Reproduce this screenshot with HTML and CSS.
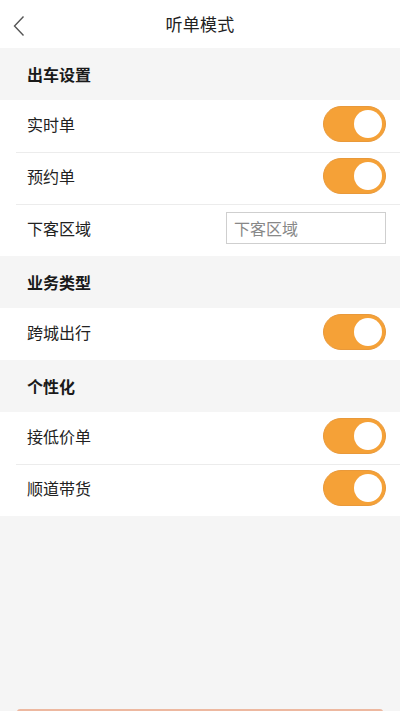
FILE: index.html
```html
<!DOCTYPE html>
<html lang="zh">
<head>
<meta charset="utf-8">
<title>听单模式</title>
<link rel="stylesheet" href="styles.css">
</head>
<body>
<div class="page">
  <header class="topbar">
    <span class="back">
      <svg width="12" height="22" viewBox="0 0 12 22"><path d="M10.5 1.5 L1.5 11 L10.5 20.5" fill="none" stroke="#555" stroke-width="1.4"/></svg>
    </span>
    <h1 class="title">听单模式</h1>
  </header>

  <div class="section-title">出车设置</div>
  <div class="group">
    <div class="row"><span class="label">实时单</span><span class="switch"><span class="knob"></span></span></div>
    <div class="row"><span class="label">预约单</span><span class="switch"><span class="knob"></span></span></div>
    <div class="row"><span class="label">下客区域</span><input class="field" type="text" placeholder="下客区域"></div>
  </div>

  <div class="section-title">业务类型</div>
  <div class="group">
    <div class="row"><span class="label">跨城出行</span><span class="switch"><span class="knob"></span></span></div>
  </div>

  <div class="section-title">个性化</div>
  <div class="group">
    <div class="row"><span class="label">接低价单</span><span class="switch"><span class="knob"></span></span></div>
    <div class="row"><span class="label">顺道带货</span><span class="switch"><span class="knob"></span></span></div>
  </div>

  <div class="filler"></div>
  <div class="submit"></div>
</div>
</body>
</html>
```

FILE: styles.css
```css
* { box-sizing: border-box; }
html, body { margin: 0; padding: 0; }
body {
  font-family: "Noto Sans CJK SC", "Noto Sans", sans-serif;
  background: #f5f5f5;
  color: #222;
}
.page {
  height: 711px;
  display: flex;
  flex-direction: column;
  overflow: hidden;
}
.topbar {
  height: 48px;
  background: #fff;
  display: flex;
  align-items: center;
  justify-content: center;
  position: relative;
  flex-shrink: 0;
  padding-bottom: 2px;
}
.back {
  position: absolute;
  left: 13px;
  top: 15px;
  display: flex;
}
.title {
  margin: 0;
  font-size: 17px;
  font-weight: 400;
  color: #222;
  letter-spacing: 0.3px;
}
.section-title {
  height: 52px;
  flex-shrink: 0;
  display: flex;
  align-items: center;
  padding-left: 27px;
  font-size: 16px;
  font-weight: 700;
  color: #1a1a1a;
}
.group {
  background: #fff;
  flex-shrink: 0;
}
.row {
  height: 52px;
  margin-left: 16px;
  padding-left: 11px;
  padding-right: 14px;
  padding-bottom: 5px;
  display: flex;
  align-items: center;
  justify-content: space-between;
  border-top: 1px solid #ececec;
}
.row:first-child { border-top: none; }
.label {
  font-size: 16px;
  color: #222;
}
.switch {
  width: 63px;
  height: 36px;
  border-radius: 18px;
  background: #f5a137;
  border: 1px solid #e9993a;
  display: flex;
  align-items: center;
  justify-content: flex-end;
  padding-right: 3px;
}
.knob {
  width: 28px;
  height: 28px;
  border-radius: 50%;
  background: #fff;
}
.field {
  width: 160px;
  height: 32px;
  border: 1px solid #cfcfcf;
  border-radius: 0;
  padding: 0 7px;
  font-family: inherit;
  font-size: 16px;
  color: #333;
  outline: none;
  background: #fff;
}
.field::placeholder { color: #888; }
.filler { flex: 1; }
.submit {
  flex-shrink: 0;
  height: 44px;
  margin: 0 17px -42px;
  border-top: 2px solid #edb8a0;
  background: #f3a58a;
  border-radius: 3px;
}
```
